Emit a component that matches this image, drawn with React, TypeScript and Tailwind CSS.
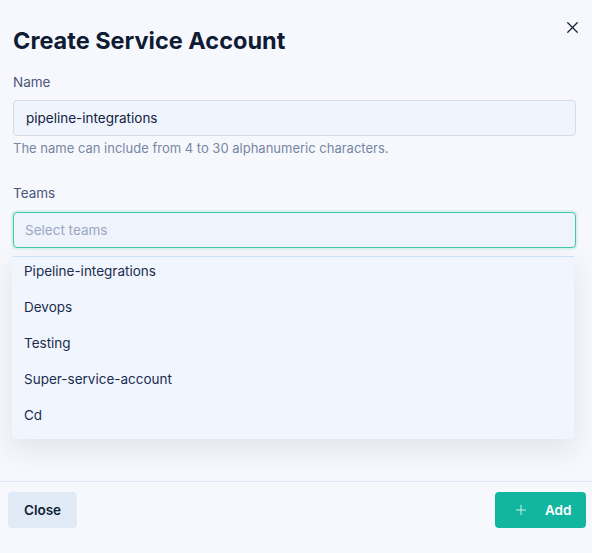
import React, { useState } from "react";
import { X, Plus } from "lucide-react";

const teams = [
  "Pipeline-integrations",
  "Devops",
  "Testing",
  "Super-service-account",
  "Cd",
];

const App = () => {
  const [name, setName] = useState("pipeline-integrations");
  const [open] = useState(true);

  return (
    <div
      className="h-[553px] w-full bg-[#f7f8fd] flex flex-col overflow-hidden"
      style={{ fontFamily: "Inter, 'Noto Sans', sans-serif" }}
    >
      {/* Body */}
      <div className="relative flex-1 px-[13px]">
        <button className="absolute right-[10px] top-[18px] text-[#16233a]">
          <X size={19} strokeWidth={1.6} />
        </button>

        <h2 className="pt-[25px] text-[23.5px] leading-[32px] font-bold text-[#0f1c33]">
          Create Service Account
        </h2>

        <label className="block mt-[15px] text-[13.5px] leading-[20px] text-[#49557a]">
          Name
        </label>
        <input
          value={name}
          onChange={(e) => setName(e.target.value)}
          className="mt-[8px] w-[563px] h-[36px] px-[12px] text-[13.5px] text-[#14233f] bg-[#eff4fd] border border-[#d2dcea] rounded-[4px] outline-none"
        />
        <p className="mt-[2px] text-[13px] leading-[20px] text-[#7587a3]">
          The name can include from 4 to 30 alphanumeric characters.
        </p>

        <label className="block mt-[25px] text-[13.5px] leading-[20px] text-[#49557a]">
          Teams
        </label>
        <div className="relative mt-[9px]">
          <div className="w-[563px] h-[36px] px-[11px] flex items-center bg-[#eef3fc] border-[1.5px] border-[#3fc8aa] rounded-[4px] ring-2 ring-[#3fc8aa]/15">
            <span className="text-[13.5px] text-[#9ba7bf]">Select teams</span>
          </div>

          {open && (
            <div className="absolute left-[-1px] top-[44px] w-[562px] bg-[#f0f5fe] border-t border-[#cbe2fa] rounded-b-[4px] shadow-[0_10px_28px_rgba(30,40,70,0.10)] pb-[2px] z-10">
              {teams.map((t) => (
                <div
                  key={t}
                  className="h-[36px] px-[12px] pt-[4px] leading-[20px] text-[13.5px] text-[#1b2d4f]"
                >
                  {t}
                </div>
              ))}
            </div>
          )}
        </div>
      </div>

      {/* Footer */}
      <div className="h-[72px] border-t border-[#dde6f4] flex items-start justify-between pl-[8px] pr-[6px] pt-[10px]">
        <button className="h-[36px] w-[69px] rounded-[4px] bg-[#e1ebf8] text-[13.5px] font-semibold text-[#0f1c33]">
          Close
        </button>
        <button className="h-[36px] w-[91px] rounded-[4px] bg-[#12b5a0] flex items-center pl-[18px] text-white text-[13.5px] font-semibold">
          <Plus size={16} strokeWidth={1.5} className="text-[#c8f0e8]" />
          <span className="ml-[16px]">Add</span>
        </button>
      </div>
    </div>
  );
};

export default App;
